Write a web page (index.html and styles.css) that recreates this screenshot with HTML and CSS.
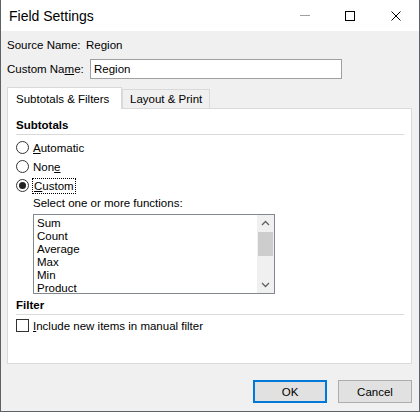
FILE: index.html
```html
<!DOCTYPE html>
<html lang="en">
<head>
    <meta charset="UTF-8">
    <meta name="viewport" content="width=device-width, initial-scale=1.0">
    <title>Field Settings</title>
    <link rel="stylesheet" href="styles.css">
</head>
<body>
    <div class="window">
        <div class="titlebar">
            <span class="title">Field Settings</span>
            <div class="controls">
                <span class="ctl ctl-min"></span>
                <span class="ctl ctl-max"></span>
                <svg class="ctl-close" width="10" height="10" viewBox="0 0 10 10">
                    <path d="M0.5 0.5L9.5 9.5M9.5 0.5L0.5 9.5" stroke="#000" stroke-width="1" fill="none"/>
                </svg>
            </div>
        </div>
        <div class="content">
            <div class="row source-row">
                <span class="label source-label">Source Name:</span>
                <span>Region</span>
            </div>
            <div class="row custom-row">
                <span class="label custom-label">Custom Na<u>m</u>e:</span>
                <input type="text" class="name-input" value="Region">
            </div>

            <div class="tabs">
                <div class="tab active">Subtotals &amp; Filters</div>
                <div class="tab">Layout &amp; Print</div>
            </div>
            <div class="panel">
                <div class="group-title">Subtotals</div>
                <div class="radio-list">
                    <div class="option"><span class="radio"></span><span><u>A</u>utomatic</span></div>
                    <div class="option"><span class="radio"></span><span>Non<u>e</u></span></div>
                    <div class="option"><span class="radio checked"></span><span class="focus"><u>C</u>ustom</span></div>
                </div>
                <div class="functions">
                    <div class="hint">Select one or more functions:</div>
                    <div class="listbox">
                        <ul class="items">
                            <li>Sum</li>
                            <li>Count</li>
                            <li>Average</li>
                            <li>Max</li>
                            <li>Min</li>
                            <li>Product</li>
                        </ul>
                        <div class="scrollbar">
                            <svg class="arrow" width="17" height="17" viewBox="0 0 17 17">
                                <path d="M5 10L8.5 6.5L12 10" stroke="#606060" stroke-width="1.3" fill="none"/>
                            </svg>
                            <div class="track"><div class="thumb"></div></div>
                            <svg class="arrow" width="17" height="17" viewBox="0 0 17 17">
                                <path d="M5 7L8.5 10.5L12 7" stroke="#606060" stroke-width="1.3" fill="none"/>
                            </svg>
                        </div>
                    </div>
                </div>
                <div class="group-title filter-title">Filter</div>
                <div class="option check-option"><span class="checkbox"></span><span><u>I</u>nclude new items in manual filter</span></div>
            </div>

            <div class="buttons">
                <button class="btn default">OK</button>
                <button class="btn">Cancel</button>
            </div>
        </div>
    </div>
</body>
</html>
```

FILE: styles.css
```css
body {
    margin: 0;
    font-family: "Liberation Sans", Arial, sans-serif;
    font-size: 11.5px;
    color: #000;
}
.window {
    width: 420px;
    height: 412px;
    box-sizing: border-box;
    border: 1px solid #5c6266;
    border-top: none;
    background: #f0f0f0;
    display: flex;
    flex-direction: column;
}
.titlebar {
    height: 31px;
    background: #fff;
    display: flex;
    align-items: center;
    justify-content: space-between;
    padding-left: 8px;
}
.title {
    font-size: 14px;
    margin-top: 1px;
}
.controls {
    display: flex;
    align-items: center;
    height: 100%;
}
.ctl {
    display: block;
}
.ctl-min {
    width: 10px;
    height: 1px;
    background: #a0a0a0;
    margin-right: 35px;
}
.ctl-max {
    width: 8px;
    height: 8px;
    border: 1px solid #000;
    margin-right: 36px;
}
.ctl-close {
    margin-right: 18px;
}
.content {
    flex: 1;
    padding: 0 7px 0 6px;
    display: flex;
    flex-direction: column;
}
.row {
    display: flex;
    align-items: center;
}
.label {
    white-space: nowrap;
    flex-shrink: 0;
}
.source-row {
    height: 20px;
    margin-top: 4px;
}
.source-label {
    width: 79px;
}
.custom-row {
    height: 20px;
    margin-top: 4px;
}
.custom-label {
    width: 83px;
}
.name-input {
    margin: 0;
    width: 252px;
    height: 20px;
    box-sizing: border-box;
    border: 1px solid #a0a0a0;
    padding: 0 3px;
    font: inherit;
    background: #fff;
}
.tabs {
    display: flex;
    align-items: flex-end;
    margin-top: 8px;
    height: 21px;
}
.tab {
    height: 19px;
    line-height: 18px;
    padding: 0 7px;
    border: 1px solid #d9d9d9;
    border-bottom: none;
    background: #f0f0f0;
    box-sizing: border-box;
}
.tab.active {
    height: 22px;
    line-height: 22px;
    padding-left: 8px;
    background: #fff;
    width: 115px;
    position: relative;
    top: 1px;
    z-index: 1;
}
.panel {
    height: 256px;
    box-sizing: border-box;
    border: 1px solid #d9d9d9;
    background: #fff;
    padding: 7px 7px 0 8px;
}
.group-title {
    font-weight: bold;
    height: 18px;
    line-height: 18px;
    border-bottom: 1px solid #d9d9d9;
}
.radio-list {
    margin-top: 3px;
}
.option {
    display: flex;
    align-items: center;
    height: 19px;
}
.radio {
    width: 13px;
    height: 13px;
    box-sizing: border-box;
    border: 1px solid #333;
    border-radius: 50%;
    margin-right: 4px;
    display: flex;
    align-items: center;
    justify-content: center;
}
.radio.checked::after {
    content: "";
    width: 7px;
    height: 7px;
    border-radius: 50%;
    background: #222;
}
.focus {
    outline: 1px dotted #000;
    padding: 0 1px;
    line-height: 14px;
}
.functions {
    padding-left: 17px;
}
.hint {
    height: 17px;
    line-height: 17px;
}
.listbox {
    display: flex;
    width: 242px;
    height: 80px;
    box-sizing: border-box;
    border: 1px solid #828790;
    background: #fff;
    margin-top: 2px;
}
.items {
    flex: 1;
    list-style: none;
    margin: 0;
    padding: 2px 0 0 3px;
}
.items li {
    height: 13px;
    line-height: 13px;
}
.scrollbar {
    width: 17px;
    background: #f0f0f0;
    display: flex;
    flex-direction: column;
}
.arrow {
    display: block;
}
.track {
    flex: 1;
}
.thumb {
    height: 24px;
    margin: 0 1px;
    background: #cdcdcd;
}
.filter-title {
    margin-top: 2px;
}
.check-option {
    margin-top: 1px;
}
.checkbox {
    width: 13px;
    height: 13px;
    box-sizing: border-box;
    border: 1px solid #333;
    margin-right: 4px;
}
.buttons {
    display: flex;
    justify-content: flex-end;
    gap: 11px;
    margin-top: 16px;
}
.btn {
    width: 74px;
    height: 23px;
    font: inherit;
    background: #e1e1e1;
    border: 1px solid #adadad;
    padding: 0;
    color: #000;
}
.btn.default {
    border: 2px solid #0078d7;
}
```
